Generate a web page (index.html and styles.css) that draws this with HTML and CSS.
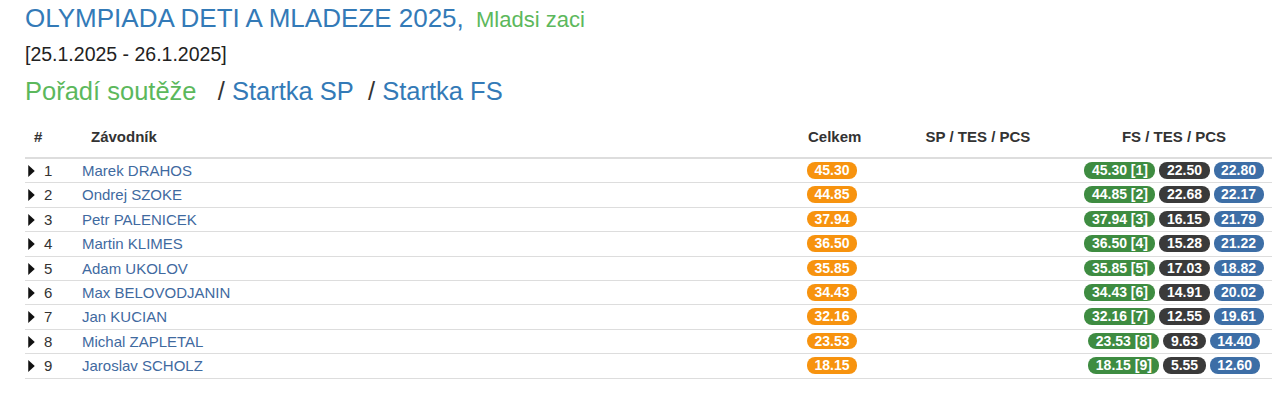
FILE: index.html
```html
<!DOCTYPE html>
<html lang="cs">
<head>
<meta charset="utf-8">
<title>Olympiada deti a mladeze 2025</title>
<link rel="stylesheet" href="styles.css">
</head>
<body>
<div class="page">
  <h1 class="title">OLYMPIADA DETI A MLADEZE 2025, <span class="cat">Mladsi zaci</span></h1>
  <div class="dates">[25.1.2025 - 26.1.2025]</div>
  <nav class="tabs"><span class="active">Pořadí soutěže</span>&nbsp;&nbsp; / <a href="#">Startka SP</a>&nbsp; / <a href="#">Startka FS</a></nav>

  <table class="results">
    <colgroup>
      <col class="w-num"><col class="w-name"><col class="w-total"><col class="w-sp"><col class="w-fs">
    </colgroup>
    <thead>
      <tr>
        <th class="h-num">#</th>
        <th class="h-name">Závodník</th>
        <th class="h-total">Celkem</th>
        <th class="h-seg">SP / TES / PCS</th>
        <th class="h-seg">FS / TES / PCS</th>
      </tr>
    </thead>
    <tbody>
      <tr><td class="num"><svg class="caret" viewBox="0 0 6 11"><polygon points="0,0 6,5.5 0,11"/></svg>1</td><td><a href="#">Marek DRAHOS</a></td><td><span class="badge orange">45.30</span></td><td></td><td><div class="fs"><span class="badge green">45.30 [1]</span><span class="badge dark">22.50</span><span class="badge blue">22.80</span></div></td></tr>
      <tr><td class="num"><svg class="caret" viewBox="0 0 6 11"><polygon points="0,0 6,5.5 0,11"/></svg>2</td><td><a href="#">Ondrej SZOKE</a></td><td><span class="badge orange">44.85</span></td><td></td><td><div class="fs"><span class="badge green">44.85 [2]</span><span class="badge dark">22.68</span><span class="badge blue">22.17</span></div></td></tr>
      <tr><td class="num"><svg class="caret" viewBox="0 0 6 11"><polygon points="0,0 6,5.5 0,11"/></svg>3</td><td><a href="#">Petr PALENICEK</a></td><td><span class="badge orange">37.94</span></td><td></td><td><div class="fs"><span class="badge green">37.94 [3]</span><span class="badge dark">16.15</span><span class="badge blue">21.79</span></div></td></tr>
      <tr><td class="num"><svg class="caret" viewBox="0 0 6 11"><polygon points="0,0 6,5.5 0,11"/></svg>4</td><td><a href="#">Martin KLIMES</a></td><td><span class="badge orange">36.50</span></td><td></td><td><div class="fs"><span class="badge green">36.50 [4]</span><span class="badge dark">15.28</span><span class="badge blue">21.22</span></div></td></tr>
      <tr><td class="num"><svg class="caret" viewBox="0 0 6 11"><polygon points="0,0 6,5.5 0,11"/></svg>5</td><td><a href="#">Adam UKOLOV</a></td><td><span class="badge orange">35.85</span></td><td></td><td><div class="fs"><span class="badge green">35.85 [5]</span><span class="badge dark">17.03</span><span class="badge blue">18.82</span></div></td></tr>
      <tr><td class="num"><svg class="caret" viewBox="0 0 6 11"><polygon points="0,0 6,5.5 0,11"/></svg>6</td><td><a href="#">Max BELOVODJANIN</a></td><td><span class="badge orange">34.43</span></td><td></td><td><div class="fs"><span class="badge green">34.43 [6]</span><span class="badge dark">14.91</span><span class="badge blue">20.02</span></div></td></tr>
      <tr><td class="num"><svg class="caret" viewBox="0 0 6 11"><polygon points="0,0 6,5.5 0,11"/></svg>7</td><td><a href="#">Jan KUCIAN</a></td><td><span class="badge orange">32.16</span></td><td></td><td><div class="fs"><span class="badge green">32.16 [7]</span><span class="badge dark">12.55</span><span class="badge blue">19.61</span></div></td></tr>
      <tr><td class="num"><svg class="caret" viewBox="0 0 6 11"><polygon points="0,0 6,5.5 0,11"/></svg>8</td><td><a href="#">Michal ZAPLETAL</a></td><td><span class="badge orange">23.53</span></td><td></td><td><div class="fs"><span class="badge green">23.53 [8]</span><span class="badge dark">9.63</span><span class="badge blue">14.40</span></div></td></tr>
      <tr><td class="num"><svg class="caret" viewBox="0 0 6 11"><polygon points="0,0 6,5.5 0,11"/></svg>9</td><td><a href="#">Jaroslav SCHOLZ</a></td><td><span class="badge orange">18.15</span></td><td></td><td><div class="fs"><span class="badge green">18.15 [9]</span><span class="badge dark">5.55</span><span class="badge blue">12.60</span></div></td></tr>
    </tbody>
  </table>
</div>
</body>
</html>
```
FILE: styles.css
```css
html, body {
  margin: 0;
  padding: 0;
  background: #fff;
}

body {
  font-family: "Liberation Sans", Arial, Helvetica, sans-serif;
  color: #333;
}

.page {
  padding: 4px 8px 0 25px;
}

.title {
  margin: 0;
  font-size: 26px;
  line-height: 28px;
  font-weight: normal;
  color: #337ab7;
}

.title .cat {
  margin-left: 5px;
  font-size: 22px;
  color: #5cb85c;
}

.dates {
  margin-top: 8px;
  font-size: 19.5px;
  line-height: 24px;
  color: #222;
}

.tabs {
  margin-top: 10px;
  font-size: 25.5px;
  line-height: 30px;
  color: #333;
}

.tabs .active {
  color: #5cb85c;
}

.tabs a {
  color: #337ab7;
  text-decoration: none;
}

.results {
  margin-top: 11px;
  width: 1247px;
  border-collapse: collapse;
  table-layout: fixed;
  font-size: 15px;
}

.w-num { width: 50px; }
.w-name { width: 725px; }
.w-total { width: 80px; }
.w-sp { width: 196px; }
.w-fs { width: 196px; }

.results th {
  padding: 11px 7px 11px;
  line-height: 18px;
  text-align: left;
  font-weight: bold;
  color: #333;
  border-bottom: 2px solid #ddd;
}

.results th.h-num { padding-left: 9px; }
.results th.h-name { padding-left: 16px; }
.results th.h-total { padding-left: 8px; }
.results th.h-seg { text-align: center; }

.results td {
  padding: 3px 7px 3px;
  line-height: 17.4px;
  border-bottom: 1px solid #ddd;
  vertical-align: top;
  white-space: nowrap;
}

.results td.num {
  padding-left: 3px;
  color: #333;
}

.caret {
  width: 7px;
  height: 12px;
  margin-right: 9px;
  vertical-align: -1px;
  fill: #111;
}

.results td a {
  color: #3f6a9f;
  text-decoration: none;
}

.badge {
  display: inline-block;
  margin-top: 0;
  padding: 1px 7.5px;
  font-size: 14px;
  line-height: 14.5px;
  font-weight: bold;
  color: #fff;
  border-radius: 8px;
  vertical-align: top;
}

.orange { background: #f7930f; }
.green { background: #3e8c41; }
.dark { background: #3a3a3a; }
.blue { background: #3d6ea6; }

.fs {
  display: flex;
  justify-content: center;
  align-items: flex-start;
  gap: 4px;
  height: 17.4px;
}
```
